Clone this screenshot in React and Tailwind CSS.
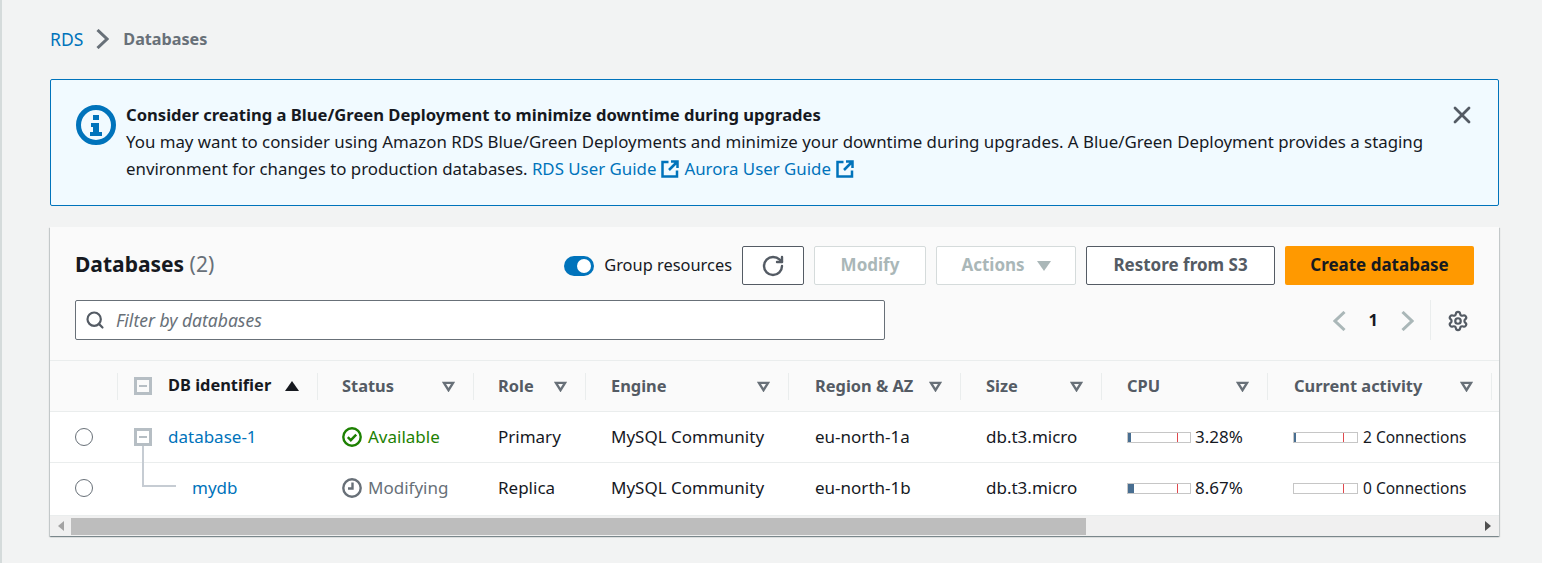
import { Search, X, Settings, RotateCw } from "lucide-react";

const gridCols = "grid grid-cols-[67px_200px_156px_112px_203px_172px_141px_166px_224px_1fr]";

const columns = [
  { label: "Status", pad: "pl-[24px]" },
  { label: "Role", pad: "pl-[24px]" },
  { label: "Engine", pad: "pl-[25px]" },
  { label: "Region & AZ", pad: "pl-[26px]" },
  { label: "Size", pad: "pl-[25px]" },
  { label: "CPU", pad: "pl-[25px]" },
  { label: "Current activity", pad: "pl-[26px]" },
];

const rows = [
  { role: "Primary", az: "eu-north-1a", cpu: "3.28%", cpuFill: "w-[3px]", conn: "2 Connections", connFill: "w-[2px]" },
  { role: "Replica", az: "eu-north-1b", cpu: "8.67%", cpuFill: "w-[6px]", conn: "0 Connections", connFill: "w-0" },
];

function Chevron({ left, className }) {
  return (
    <svg viewBox="0 0 13 20" className={`w-[13px] h-[20px] shrink-0 ${className}`} fill="none" stroke="currentColor" strokeWidth="3">
      <path d={left ? "M11.5 1 2 10l9.5 9" : "M1.5 1 11 10l-9.5 9"} />
    </svg>
  );
}

function ExternalIcon() {
  return (
    <svg viewBox="0 0 18 18" className="inline-block w-[18px] h-[18px] mx-[5px] align-[-3px]" fill="none" stroke="#0073bb" strokeWidth="2.5">
      <path d="M7.5 2H1.5v14.5H16V10.5" />
      <path d="M10 1.5h6.5V8M16 2 8 10" />
    </svg>
  );
}

function InfoIcon() {
  return (
    <svg viewBox="0 0 40 40" className="w-10 h-10 shrink-0 mt-[1px]" fill="none">
      <circle cx="20" cy="20" r="17.5" stroke="#0073bb" strokeWidth="5" />
      <rect x="17" y="10" width="6" height="5" fill="#0073bb" />
      <path d="M15 18h8v9h3v4H14v-4h3v-5h-2z" fill="#0073bb" />
    </svg>
  );
}

function FilterCaret() {
  return (
    <svg viewBox="0 0 14 12" className="ml-auto mr-[18px] w-[13px] h-[11px] shrink-0" fill="none" stroke="#687078" strokeWidth="2.6">
      <path d="M2 2h10l-5 8z" />
    </svg>
  );
}

function TreeToggle() {
  return (
    <span className="relative z-10 flex items-center justify-center w-[18px] h-[18px] border-[3px] border-[#b6bec4]">
      <span className="w-[8px] h-[2px] bg-[#b6bec4]" />
    </span>
  );
}

function UsageBar({ fill, width, mark }) {
  return (
    <span className={`relative flex h-[11px] border border-[#c6c6c6] bg-white shrink-0 ${width}`}>
      <span className={`h-full bg-[#486e91] ${fill}`} />
      <span className={`absolute top-0 bottom-0 w-px bg-[#e0484d] ${mark}`} />
    </span>
  );
}

function StatusIcon({ type }) {
  if (type === "ok") {
    return (
      <svg viewBox="0 0 20 20" className="w-5 h-5 mr-[6px] shrink-0" fill="none" stroke="#1d8102" strokeWidth="2.4">
        <circle cx="10" cy="10" r="8.7" />
        <path d="m5.8 10.2 3 3 5.4-5.6" />
      </svg>
    );
  }
  return (
    <svg viewBox="0 0 20 20" className="w-5 h-5 mr-[6px] shrink-0" fill="none" stroke="#687078" strokeWidth="2.4">
      <circle cx="10" cy="10" r="8.7" />
      <path d="M10.5 4.5v6H6" />
    </svg>
  );
}

export default function App() {
  return (
    <div className="h-[563px] overflow-hidden bg-[#f2f3f3] border-l-2 border-[#d5dbdb] text-[16px] text-[#16191f] font-['Noto_Sans','Open_Sans',sans-serif]">
      <div className="pl-[48px] pr-[43px]">
        <nav className="flex items-center h-[79px] pb-[1px]">
          <a className="text-[17.5px] text-[#0073bb]">RDS</a>
          <Chevron className="ml-[13px] mr-[14px] text-[#687078]" />
          <span className="font-bold text-[16.2px] text-[#687078]">Databases</span>
        </nav>

        <section className="flex h-[127px] rounded-[2px] border border-[#0073bb] bg-[#f1faff] pl-[25px] pr-[25px] pt-[24px]">
          <InfoIcon />
          <div className="flex-1 ml-[10px] leading-[27px] -mt-[3px]">
            <h2 className="font-bold text-[16.6px]">Consider creating a Blue/Green Deployment to minimize downtime during upgrades</h2>
            <div className="text-[16.85px]">You may want to consider using Amazon RDS Blue/Green Deployments and minimize your downtime during upgrades. A Blue/Green Deployment provides a staging</div>
            <div className="text-[16.85px]">
              <span>environment for changes to production databases. </span>
              <a className="text-[#0073bb]">RDS User Guide</a>
              <ExternalIcon />
              <a className="text-[#0073bb]">Aurora User Guide</a>
              <ExternalIcon />
            </div>
          </div>
          <X className="w-[28px] h-[28px] -mt-[3px] -mr-[3px] text-[#545b64]" strokeWidth={2.4} />
        </section>

        <section className="mt-[21px] h-[309px] bg-white shadow-[0_1px_1px_0_rgba(0,28,36,0.3),1px_1px_1px_0_rgba(0,28,36,0.15),-1px_1px_1px_0_rgba(0,28,36,0.15)]">
          <div className="h-[134px] bg-[#fafafa] border-b border-[#eaeded] px-[25px] pt-[19px]">
            <div className="flex items-center h-[39px]">
              <h1 className="text-[21px] font-bold -mt-[2px]">
                Databases <span className="font-normal text-[#687078]">(2)</span>
              </h1>
              <span className="ml-auto flex items-center justify-end w-[30px] h-[20px] rounded-full bg-[#0073bb] pr-[3px]">
                <span className="w-[14px] h-[14px] rounded-full bg-white" />
              </span>
              <span className="ml-[10px] text-[16.4px] -mt-[1px]">Group resources</span>
              <button className="ml-[10px] flex items-center justify-center w-[62px] h-[39px] rounded-[2px] border border-[#545b64] bg-white text-[#545b64]">
                <RotateCw className="w-[24px] h-[24px]" strokeWidth={2.4} />
              </button>
              <button className="ml-[10px] w-[112px] h-[39px] pb-[2px] rounded-[2px] border border-[#d5dbdb] bg-white text-[17px] font-bold text-[#aab7b8]">Modify</button>
              <button className="ml-[10px] flex items-center justify-center w-[140px] h-[39px] rounded-[2px] border border-[#d5dbdb] bg-white text-[17px] font-bold text-[#aab7b8]">
                <span className="-mt-[2px]">Actions</span>
                <svg viewBox="0 0 14 10" className="ml-[12px] w-[14px] h-[10px]" fill="#aab7b8"><path d="M0 0h14L7 10z" /></svg>
              </button>
              <button className="ml-[10px] w-[189px] h-[39px] pb-[2px] rounded-[2px] border border-[#545b64] bg-white text-[17px] font-bold text-[#545b64]">Restore from S3</button>
              <button className="ml-[10px] w-[189px] h-[39px] pb-[2px] rounded-[2px] bg-[#ff9900] text-[17px] font-bold text-[#16191f]">Create database</button>
            </div>

            <div className="flex items-center mt-[15px] h-[40px]">
              <div className="flex items-center w-[810px] h-[40px] rounded-[2px] border border-[#687078] bg-white px-[10px]">
                <Search className="w-[20px] h-[20px] -ml-[1px] text-[#545b64]" strokeWidth={2.6} />
                <span className="ml-[11px] text-[17.5px] italic text-[#687078]">Filter by databases</span>
              </div>
              <Chevron left className="ml-auto mt-[1px] text-[#aab7b8]" />
              <span className="mx-[23px] text-[16.5px] font-bold">1</span>
              <Chevron className="mt-[1px] text-[#aab7b8]" />
              <span className="ml-[16px] mr-[16px] w-px h-[40px] bg-[#eaeded]" />
              <Settings className="w-[22px] h-[22px] mt-[1px] text-[#545b64]" strokeWidth={2.4} />
              <span className="w-[5px]" />
            </div>
          </div>

          <div className={`${gridCols} h-[51px] bg-[#fafafa] border-b border-[#eaeded] items-center`}>
            <span />
            <div className="flex items-center h-[27px] border-l border-[#eaeded] pl-[16px]">
              <TreeToggle />
              <span className="ml-[16px] -mt-[2px] text-[16.4px] font-bold">DB identifier</span>
              <svg viewBox="0 0 14 10" className="ml-[14px] w-[14px] h-[10px]" fill="#16191f"><path d="M7 0l7 10H0z" /></svg>
            </div>
            {columns.map((col) => (
              <div key={col.label} className={`flex items-center h-[27px] border-l border-[#eaeded] text-[16.4px] font-bold text-[#545b64] ${col.pad}`}>
                <span className="whitespace-nowrap">{col.label}</span>
                <FilterCaret />
              </div>
            ))}
            <span className="h-[27px] border-l border-[#eaeded]" />
          </div>

          {rows.map((row, i) => (
            <div key={row.az} className={`${gridCols} items-center border-b border-[#eaeded] text-[17px] ${i === 0 ? "h-[51px]" : "h-[53px] pb-[2px]"}`}>
              <span className="pl-[25px]">
                <span className="block w-[18px] h-[18px] rounded-full border-[1.5px] border-[#687078]" />
              </span>
              {i === 0 ? (
                <div className="flex items-center pl-[17px]">
                  <TreeToggle />
                  <a className="ml-[16px] text-[#0073bb]">database-1</a>
                </div>
              ) : (
                <div className="relative flex items-center pl-[75px]">
                  <span className="absolute left-[25px] -top-[30px] w-[34px] h-[42px] border-l-2 border-b-2 border-[#c6ccd3]" />
                  <a className="text-[#0073bb]">mydb</a>
                </div>
              )}
              <div className={`flex items-center pl-[25px] ${i === 0 ? "text-[#1d8102]" : "text-[#687078]"}`}>
                <StatusIcon type={i === 0 ? "ok" : "pending"} />
                {i === 0 ? "Available" : "Modifying"}
              </div>
              <span className="pl-[25px]">{row.role}</span>
              <span className="pl-[26px]">MySQL Community</span>
              <span className="pl-[27px]">{row.az}</span>
              <span className="pl-[26px]">db.t3.micro</span>
              <div className="flex items-center pl-[26px]">
                <UsageBar fill={row.cpuFill} width="w-[64px]" mark="right-[12px]" />
                <span className="ml-[4px]">{row.cpu}</span>
              </div>
              <div className="flex items-center pl-[26px] whitespace-nowrap text-[15.5px]">
                <UsageBar fill={row.connFill} width="w-[65px]" mark="right-[13px]" />
                <span className="ml-[5px] mt-[1px]">{row.conn}</span>
              </div>
              <span />
            </div>
          ))}

          <div className="flex items-center h-[20px] bg-[#f0f0f0]">
            <svg viewBox="0 0 6 10" className="ml-[8px] w-[6px] h-[10px]" fill="#a3a3a3"><path d="M6 0v10L0 5z" /></svg>
            <span className="ml-[7px] w-[1015px] h-[17px] bg-[#bdbdbd]" />
            <svg viewBox="0 0 6 10" className="ml-auto mr-[8px] w-[6px] h-[10px]" fill="#505050"><path d="M0 0v10l6-5z" /></svg>
          </div>
        </section>
      </div>
    </div>
  );
}
